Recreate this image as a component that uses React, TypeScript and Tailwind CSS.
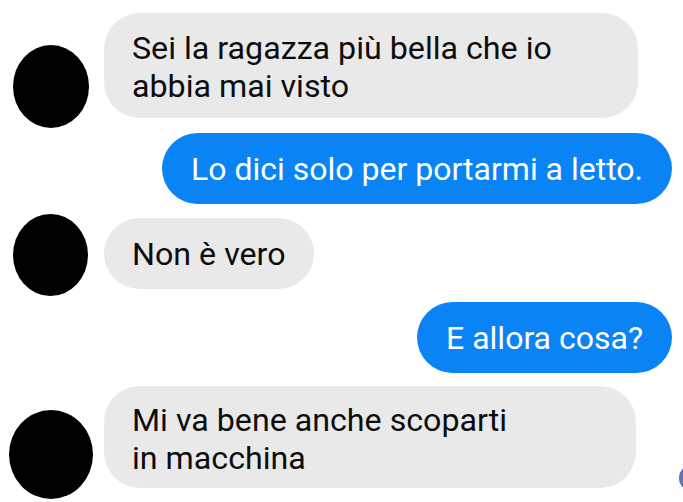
import React from 'react';

// Chat thread: gray bubbles come in with a (blacked-out) avatar, blue ones go out
const FONT = { fontFamily: 'Roboto, "Noto Sans", sans-serif' };

function Blot({ className }: { className: string }) {
  return <div className={`rounded-[50%] bg-black ${className}`} />;
}

function InBubble({ children, className }: { children: React.ReactNode; className: string }) {
  return (
    <div className={`shrink-0 rounded-[36px] bg-[#e9e9e9] px-[28px] text-[32.2px] leading-[38px] text-[#0d0d0d] ${className}`}>
      {children}
    </div>
  );
}

function OutBubble({ children, className }: { children: React.ReactNode; className: string }) {
  return (
    <div className={`rounded-[36px] bg-[#0a84f5] px-[29px] pt-[17px] pb-[16px] text-[32px] leading-[38px] text-white ${className}`}>
      {children}
    </div>
  );
}

export default function App() {
  return (
    <div className="h-[502px] w-[683px] overflow-hidden bg-white pt-[13px]" style={FONT}>
      <div className="flex items-start">
        <div className="w-[104px] shrink-0 pl-[13px] pt-[32px]">
          <Blot className="h-[83px] w-[76px]" />
        </div>
        <InBubble className="w-[534px] pt-[16px] pb-[13px]">
          Sei la ragazza più bella che io
          <br />
          abbia mai visto
        </InBubble>
      </div>

      <div className="mt-[5px] flex justify-end pr-[11px]">
        <OutBubble className="">Lo dici solo per portarmi a letto.</OutBubble>
      </div>

      <div className="mt-[10px] flex items-start">
        <div className="w-[104px] shrink-0 pl-[13px]">
          <Blot className="h-[82px] w-[75px]" />
        </div>
        <InBubble className="mt-[4px] pt-[17px] pb-[16px]">Non è vero</InBubble>
      </div>

      <div className="mt-[6px] flex justify-end pr-[11px]">
        <OutBubble className="">E allora cosa?</OutBubble>
      </div>

      <div className="mt-[13px] flex items-start">
        <div className="w-[104px] shrink-0 pl-[9px] pt-[24px]">
          <Blot className="h-[89px] w-[84px]" />
        </div>
        <InBubble className="w-[532px] pt-[15px] pb-[11px]">
          Mi va bene anche scoparti
          <br />
          in macchina
        </InBubble>
        <div className="ml-[43px] mt-[78px] h-[28px] w-[28px] shrink-0 rounded-full bg-[#5d74b6]" />
      </div>
    </div>
  );
}
